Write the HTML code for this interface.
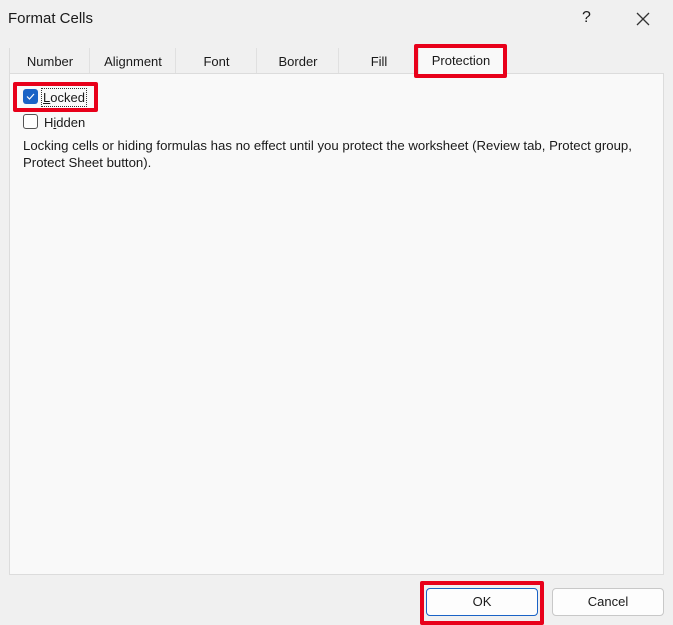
<!DOCTYPE html>
<html><head><style>
body{margin:0;width:673px;height:624px;background:#f0f0f0;font-family:"Liberation Sans",sans-serif;position:relative;overflow:hidden;color:#1a1a1a}
.a{position:absolute}
.tab{position:absolute;top:48px;height:25px;font-size:13px;line-height:27px;text-align:center;background:#f0f0f0;border-left:1px solid #e0e0e0}
.panel{left:9px;top:73px;width:653px;height:500px;background:#f9f9f9;border:1px solid #dcdcdc}
.btn{position:absolute;top:588px;height:26px;width:110px;background:#fdfdfd;border:1px solid #c8c8c8;border-radius:4px;font-size:13px;line-height:26px;text-align:center}
.red{position:absolute;border:4px solid #e8001a;border-radius:2px;box-sizing:border-box}
</style></head><body>
<div class="a" style="left:8px;top:10px;font-size:15px">Format Cells</div>
<div class="a" style="left:582px;top:9px;font-size:16px">?</div>
<svg class="a" style="left:636px;top:12px" width="14" height="14"><path d="M1 1L13 13M13 1L1 13" stroke="#333" stroke-width="1.3"/></svg>
<div class="a panel"></div>
<div class="tab" style="left:9px;width:80px;border-left:1px solid #dcdcdc">Number</div>
<div class="tab" style="left:89px;width:86px">Alignment</div>
<div class="tab" style="left:175px;width:81px">Font</div>
<div class="tab" style="left:256px;width:82px">Border</div>
<div class="tab" style="left:338px;width:80px">Fill</div>
<div class="tab" style="left:418px;width:84px;top:45px;height:29px;background:#f9f9f9;line-height:31px">Protection</div>
<div class="red" style="left:414px;top:44px;width:93px;height:34px"></div>
<div class="a" style="left:23px;top:89px;width:15px;height:15px;background:#1a63c6;border-radius:3px"></div>
<svg class="a" style="left:23px;top:89px" width="15" height="15"><path d="M4 7.5L6.5 10L11 5" stroke="#fff" stroke-width="1.2" fill="none"/></svg>
<div class="a" style="left:42px;top:89px;font-size:13px;outline:1px dotted #333;padding:0 1px;line-height:17px"><u>L</u>ocked</div>
<div class="red" style="left:13px;top:82px;width:85px;height:30px"></div>
<div class="a" style="left:23px;top:114px;width:13px;height:13px;border:1px solid #555;border-radius:3px;background:#fff"></div>
<div class="a" style="left:44px;top:115px;font-size:13px">H<u>i</u>dden</div>
<div class="a" style="left:23px;top:137px;font-size:13.2px;line-height:17px;width:640px">Locking cells or hiding formulas has no effect until you protect the worksheet (Review tab, Protect group, Protect Sheet button).</div>
<div class="btn" style="left:426px;border-color:#1a63c6">OK</div>
<div class="btn" style="left:552px">Cancel</div>
<div class="red" style="left:420px;top:581px;width:124px;height:44px"></div>
</body></html>
